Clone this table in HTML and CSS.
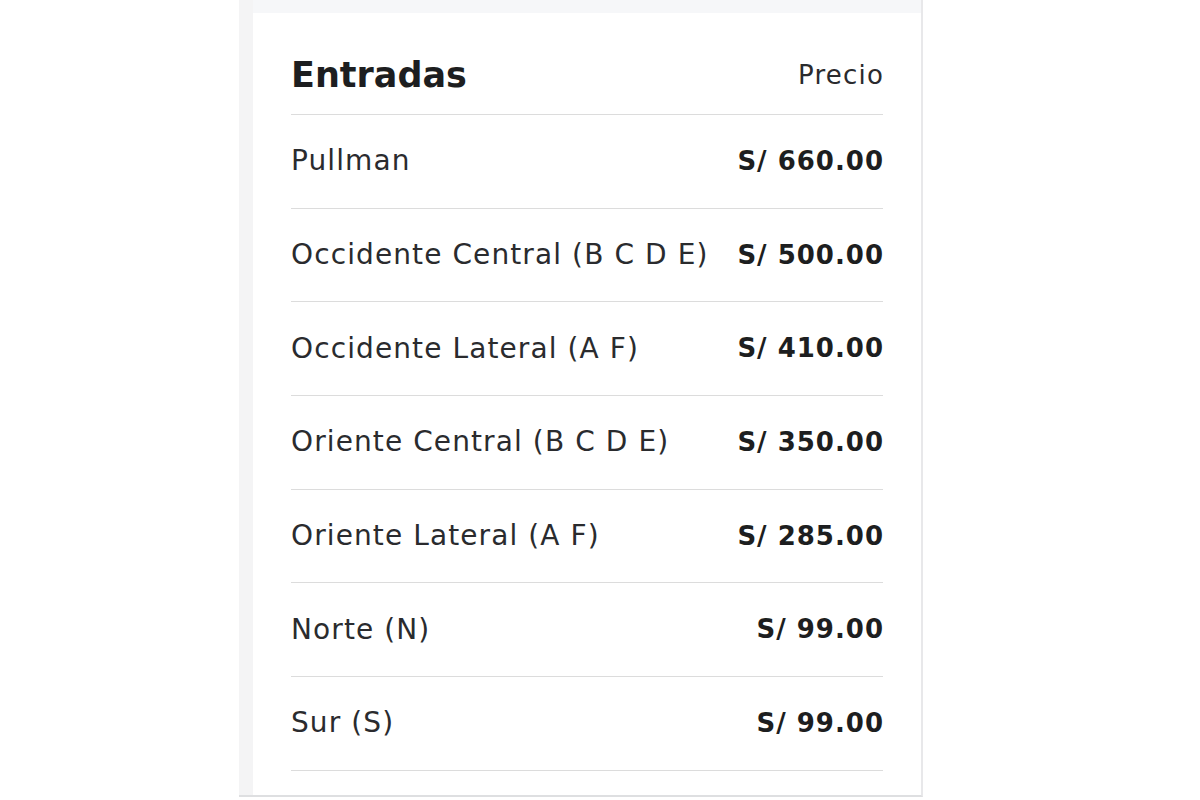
FILE: index.html
```html
<!DOCTYPE html>
<html lang="es">
<head>
<meta charset="utf-8">
<title>Entradas</title>
<link rel="stylesheet" href="styles.css">
</head>
<body>
<div class="wrap">
  <div class="card">
    <div class="head">
      <span class="title">Entradas</span>
      <span class="price-label">Precio</span>
    </div>
    <ul class="rows">
      <li class="row"><span class="name">Pullman</span><span class="price">S/ 660.00</span></li>
      <li class="row"><span class="name">Occidente Central (B C D E)</span><span class="price">S/ 500.00</span></li>
      <li class="row"><span class="name">Occidente Lateral (A F)</span><span class="price">S/ 410.00</span></li>
      <li class="row"><span class="name">Oriente Central (B C D E)</span><span class="price">S/ 350.00</span></li>
      <li class="row"><span class="name">Oriente Lateral (A F)</span><span class="price">S/ 285.00</span></li>
      <li class="row"><span class="name">Norte (N)</span><span class="price">S/ 99.00</span></li>
      <li class="row"><span class="name">Sur (S)</span><span class="price">S/ 99.00</span></li>
    </ul>
  </div>
</div>
</body>
</html>
```
FILE: styles.css
```css
html, body {
  margin: 0;
  padding: 0;
  background: #ffffff;
}
body {
  font-family: "DejaVu Sans", "Open Sans", sans-serif;
  color: #222326;
}
.wrap {
  margin-left: 239px;
  width: 668px;
  padding-left: 14px;
  background: #f4f4f5;
  border-right: 2px solid #e8e8ea;
  border-bottom: 2px solid #dedfe1;
}
.card {
  background: #ffffff;
  border-top: 13px solid #f6f7f9;
  padding: 0 38px 24px 38px;
}
.head {
  display: flex;
  justify-content: space-between;
  align-items: center;
  height: 102px;
  box-sizing: border-box;
  padding-top: 22px;
  border-bottom: 1px solid #dcdcdc;
}
.title {
  font-weight: 700;
  font-size: 35px;
  color: #1d1e20;
}
.price-label {
  font-size: 26px;
  font-weight: 400;
  letter-spacing: 1.2px;
  margin-right: -1px;
  color: #2a2b2e;
}
.rows {
  list-style: none;
  margin: 0;
  padding: 0;
}
.row {
  display: flex;
  justify-content: space-between;
  align-items: center;
  height: 93.7px;
  box-sizing: border-box;
  padding-bottom: 1px;
  border-bottom: 1px solid #dcdcdc;
}
.name {
  font-size: 28px;
  font-weight: 400;
  letter-spacing: 1.1px;
  color: #2a2b2e;
}
.price {
  font-weight: 700;
  font-size: 26px;
  letter-spacing: 1px;
  margin-right: -1px;
  color: #1d1e20;
}
```
